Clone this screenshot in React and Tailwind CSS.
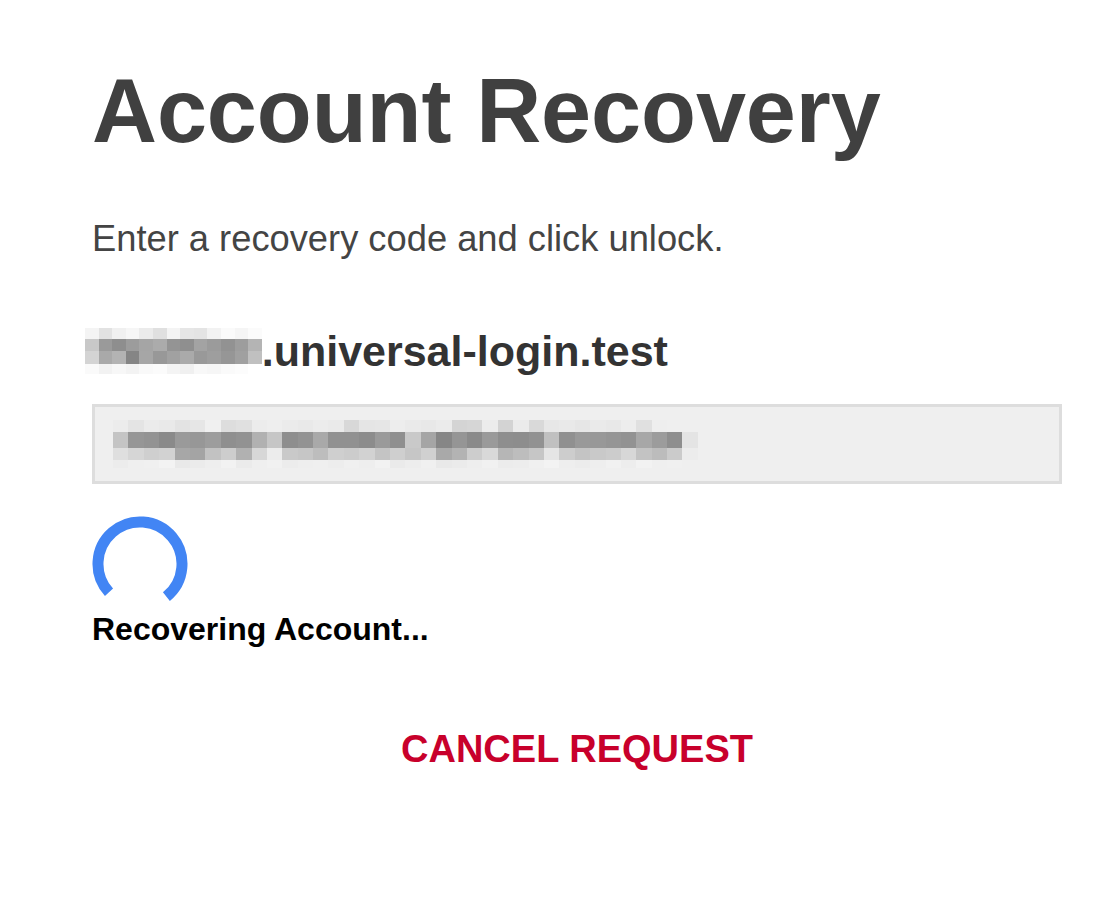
import React from "react";

// pixelated (redacted) blocks, one array per row
const domainRows = [
  { h: "h-[11px]", cells: ["bg-[#f4f4f4]", "bg-[#e2e2e2]", "bg-[#f0f0f0]", "bg-[#f6f6f6]", "bg-[#ebebeb]", "bg-[#e0e0e0]", "bg-[#f4f4f4]", "bg-[#e6e6e6]", "bg-[#e4e4e4]", "bg-[#f2f2f2]", "bg-[#fafafa]", "bg-[#f5f5f5]", "bg-[#fbfbfb]"] },
  { h: "h-[12px]", cells: ["bg-[#c8c8c8]", "bg-[#9a9a9a]", "bg-[#8e8e8e]", "bg-[#9c9c9c]", "bg-[#a5a5a5]", "bg-[#ababab]", "bg-[#949494]", "bg-[#8f8f8f]", "bg-[#a3a3a3]", "bg-[#9b9b9b]", "bg-[#929292]", "bg-[#9d9d9d]", "bg-[#b4b4b4]"] },
  { h: "h-[13px]", cells: ["bg-[#d4d4d4]", "bg-[#a9a9a9]", "bg-[#b3b3b3]", "bg-[#858585]", "bg-[#a6a6a6]", "bg-[#989898]", "bg-[#a1a1a1]", "bg-[#aaaaaa]", "bg-[#999999]", "bg-[#9e9e9e]", "bg-[#969696]", "bg-[#a0a0a0]", "bg-[#c0c0c0]"] },
  { h: "h-[10px]", cells: ["bg-[#fafafa]", "bg-[#f2f2f2]", "bg-[#f7f7f7]", "bg-[#f3f3f3]", "bg-[#f9f9f9]", "bg-[#fbfbfb]", "bg-[#f4f4f4]", "bg-[#f0f0f0]", "bg-[#f8f8f8]", "bg-[#f6f6f6]", "bg-[#fafafa]", "bg-[#fcfcfc]", "bg-[#ffffff]"] },
];

const codeRows = [
  { h: "h-[12px]", cells: ["bg-[#ececec]", "bg-[#e4e4e4]", "bg-[#ebebeb]", "bg-[#e9e9e9]", "bg-[#e3e3e3]", "bg-[#e6e6e6]", "bg-[#f0f0f0]", "bg-[#dddddd]", "bg-[#e0e0e0]", "bg-[#ececec]", "bg-[#eeeeee]", "bg-[#ebebeb]", "bg-[#e9e9e9]", "bg-[#ececec]", "bg-[#eaeaea]", "bg-[#d8d8d8]", "bg-[#e5e5e5]", "bg-[#e6e6e6]", "bg-[#ededed]", "bg-[#eaeaea]", "bg-[#e8e8e8]", "bg-[#ebebeb]", "bg-[#d4d4d4]", "bg-[#d6d6d6]", "bg-[#ececec]", "bg-[#d3d3d3]", "bg-[#ebebeb]", "bg-[#d9d9d9]", "bg-[#e7e7e7]", "bg-[#e9e9e9]", "bg-[#e6e6e6]", "bg-[#eaeaea]", "bg-[#e8e8e8]", "bg-[#ededed]", "bg-[#e0e0e0]", "bg-[#eeeeee]", "bg-[#efefef]"] },
  { h: "h-[16px]", cells: ["bg-[#c4c4c4]", "bg-[#969696]", "bg-[#939393]", "bg-[#8a8a8a]", "bg-[#9a9a9a]", "bg-[#979797]", "bg-[#9d9d9d]", "bg-[#8f8f8f]", "bg-[#929292]", "bg-[#b1b1b1]", "bg-[#c6c6c6]", "bg-[#8e8e8e]", "bg-[#939393]", "bg-[#a9a9a9]", "bg-[#919191]", "bg-[#919191]", "bg-[#8c8c8c]", "bg-[#9a9a9a]", "bg-[#8f8f8f]", "bg-[#c9c9c9]", "bg-[#a5a5a5]", "bg-[#868686]", "bg-[#959595]", "bg-[#8a8a8a]", "bg-[#9a9a9a]", "bg-[#8e8e8e]", "bg-[#8d8d8d]", "bg-[#929292]", "bg-[#c0c0c0]", "bg-[#909090]", "bg-[#999999]", "bg-[#989898]", "bg-[#959595]", "bg-[#929292]", "bg-[#a7a7a7]", "bg-[#9c9c9c]", "bg-[#8e8e8e]", "bg-[#e4e4e4]"] },
  { h: "h-[12px]", cells: ["bg-[#dfdfdf]", "bg-[#d6d6d6]", "bg-[#cfcfcf]", "bg-[#d2d2d2]", "bg-[#a7a7a7]", "bg-[#a4a4a4]", "bg-[#c2c2c2]", "bg-[#cdcdcd]", "bg-[#b1b1b1]", "bg-[#d7d7d7]", "bg-[#ececec]", "bg-[#c9c9c9]", "bg-[#c6c6c6]", "bg-[#bdbdbd]", "bg-[#cfcfcf]", "bg-[#cccccc]", "bg-[#d2d2d2]", "bg-[#c4c4c4]", "bg-[#cfcfcf]", "bg-[#c6c6c6]", "bg-[#d0d0d0]", "bg-[#a9a9a9]", "bg-[#b3b3b3]", "bg-[#cdcdcd]", "bg-[#d9d9d9]", "bg-[#b6b6b6]", "bg-[#bdbdbd]", "bg-[#c6c6c6]", "bg-[#e5e5e5]", "bg-[#cdcdcd]", "bg-[#c4c4c4]", "bg-[#c9c9c9]", "bg-[#cccccc]", "bg-[#d7d7d7]", "bg-[#c3c3c3]", "bg-[#bcbcbc]", "bg-[#cbcbcb]", "bg-[#ececec]"] },
  { h: "h-[8px]", cells: ["bg-[#ececec]", "bg-[#efefef]", "bg-[#f0f0f0]", "bg-[#f3f3f3]", "bg-[#e9e9e9]", "bg-[#ebebeb]", "bg-[#eeeeee]", "bg-[#f2f2f2]", "bg-[#ebebeb]", "bg-[#efefef]", "bg-[#f1f1f1]", "bg-[#ececec]", "bg-[#eeeeee]", "bg-[#efefef]", "bg-[#ededed]", "bg-[#f0f0f0]", "bg-[#eeeeee]", "bg-[#f2f2f2]", "bg-[#eaeaea]", "bg-[#ededed]", "bg-[#f0f0f0]", "bg-[#e9e9e9]", "bg-[#ebebeb]", "bg-[#eeeeee]", "bg-[#f1f1f1]", "bg-[#ececec]", "bg-[#ededed]", "bg-[#f0f0f0]", "bg-[#f3f3f3]", "bg-[#eeeeee]", "bg-[#ececec]", "bg-[#eeeeee]", "bg-[#f1f1f1]", "bg-[#ededed]", "bg-[#f2f2f2]", "bg-[#efefef]", "bg-[#f0f0f0]", "bg-[#efefef]"] },
];

const Mosaic = ({ rows, cell }) => (
  <div className="flex flex-col">
    {rows.map((row, i) => (
      <div key={i} className={`flex ${row.h}`}>
        {row.cells.map((c, j) => (
          <div key={j} className={`${cell} h-full ${c}`} />
        ))}
      </div>
    ))}
  </div>
);

const Spinner = () => (
  <svg width="96" height="96" viewBox="0 0 96 96" fill="none">
    <path
      d="M74.4 80.6 A42 42 0 1 0 17 76.3"
      stroke="#4285f4"
      strokeWidth="11"
      strokeLinecap="butt"
    />
  </svg>
);

const App = () => {
  return (
    <div
      className="min-h-screen bg-white"
      style={{ fontFamily: '"Liberation Sans", Arial, Helvetica, sans-serif' }}
    >
      <div className="w-[970px] ml-[92px] pt-[66px] flex flex-col">
        <h1 className="text-[90px] leading-none font-bold text-[#404040] tracking-[-0.1px]">
          Account Recovery
        </h1>

        <p className="mt-[65px] text-[36.3px] leading-none text-[#444444]">
          Enter a recovery code and click unlock.
        </p>

        <div className="mt-[71px] flex items-center -ml-[7px]">
          <Mosaic rows={domainRows} cell="w-[13.6px]" />
          <span className="text-[43px] leading-none font-bold text-[#333333]">
            .universal-login.test
          </span>
        </div>

        <div className="mt-[30px] h-[80px] w-full border-[3px] border-[#dddddd] bg-[#efefef] flex items-center pl-[18px]">
          <Mosaic rows={codeRows} cell="w-[15.4px]" />
        </div>

        <div className="mt-[32px]">
          <Spinner />
        </div>

        <p className="mt-[1px] text-[32px] leading-none font-bold text-black">
          Recovering Account...
        </p>

        <div className="mt-[85px] flex justify-center">
          <button
            type="button"
            className="text-[38px] leading-none font-bold text-[#c8002b] uppercase"
          >
            Cancel Request
          </button>
        </div>
      </div>
    </div>
  );
};

export default App;
